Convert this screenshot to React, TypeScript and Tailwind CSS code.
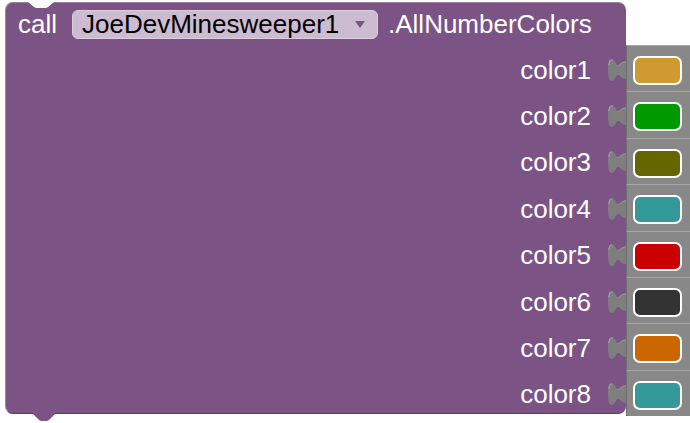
import React from "react";

const colors = [
  { name: "color1", c: "bg-[#d09a30]" },
  { name: "color2", c: "bg-[#009900]" },
  { name: "color3", c: "bg-[#666600]" },
  { name: "color4", c: "bg-[#339999]" },
  { name: "color5", c: "bg-[#cc0000]" },
  { name: "color6", c: "bg-[#333333]" },
  { name: "color7", c: "bg-[#cc6600]" },
  { name: "color8", c: "bg-[#339999]" },
];

function Tab() {
  return (
    <svg width="18" height="22" viewBox="0 0 18 22" className="block shrink-0 mt-[3px]">
      <path
        d="M18 2 C13 2 12.5 6 10 6 C7.5 6 7 0 4 0 C1 0 0 4 0 11 C0 18 1 22 4 22 C7 22 7.5 16 10 16 C12.5 16 13 20 18 20 Z"
        fill="#7e7e7e"
      />
      <path d="M1 6 C1 2 2 1 4 1" stroke="#a4a4a4" strokeWidth="1.2" fill="none" />
      <path d="M10 6.5 C12.5 6.5 13 3 18 3" stroke="#999999" strokeWidth="1" fill="none" />
    </svg>
  );
}

export default function App() {
  return (
    <div className="relative w-[690px] h-[423px] bg-white overflow-hidden font-['Liberation_Sans',Arial,sans-serif]">
      <div className="ml-[5px] pt-[2px]">
        <div className="relative w-[621px] h-[412px] bg-[#7c5385] rounded-[8px] border-t border-l border-b border-t-[#9a7ea2] border-l-[#a08aa6] border-b-[#5e3b66]">
          {/* top notch */}
          <svg className="absolute left-[22px] top-[-3px]" width="26" height="9" viewBox="0 0 26 9">
            <path d="M0 0 H26 V2 L20 7 Q19 8 17 8 H9 Q7 8 6 7 L0 2 Z" fill="#ffffff" />
          </svg>
          {/* bottom tab */}
          <svg className="absolute left-[26px] bottom-[-9px]" width="24" height="9" viewBox="0 0 24 9">
            <path d="M0 0 H24 L17 7 Q16 8 14 8 H10 Q8 8 7 7 Z" fill="#7c5385" />
          </svg>
          {/* header */}
          <div className="flex items-center h-[42px] pl-[12px] text-white text-[26px] leading-none">
            <span>call</span>
            <div className="ml-[15px] flex items-center h-[29px] w-[306px] rounded-[6px] bg-[#cdbcd1] border border-[#dacfdd] pl-[9px] text-black">
              <span>JoeDevMinesweeper1</span>
              <svg className="ml-[16px]" width="10" height="7" viewBox="0 0 10 7">
                <path d="M0 0 H10 L5 7 Z" fill="#7a5683" />
              </svg>
            </div>
            <span className="ml-[10px]">.AllNumberColors</span>
          </div>
          {/* rows */}
          <div className="flex flex-col">
            {colors.map((r) => (
              <div key={r.name} className="flex items-center justify-end h-[46.4px]">
                <span className="text-white text-[26px] leading-none mr-[17px] mt-[3px]">{r.name}</span>
                <Tab />
                <div className="flex items-start shrink-0 w-[65px] h-[46.4px] -mr-[65px] bg-[#888888] border-t border-t-[#a6a6a6] border-l border-l-[#6e6e6e] pl-[6px] pt-[10px]">
                  <div className={`w-[49px] h-[29px] rounded-[7px] border-2 border-white ${r.c}`} />
                </div>
              </div>
            ))}
          </div>
        </div>
      </div>
    </div>
  );
}
